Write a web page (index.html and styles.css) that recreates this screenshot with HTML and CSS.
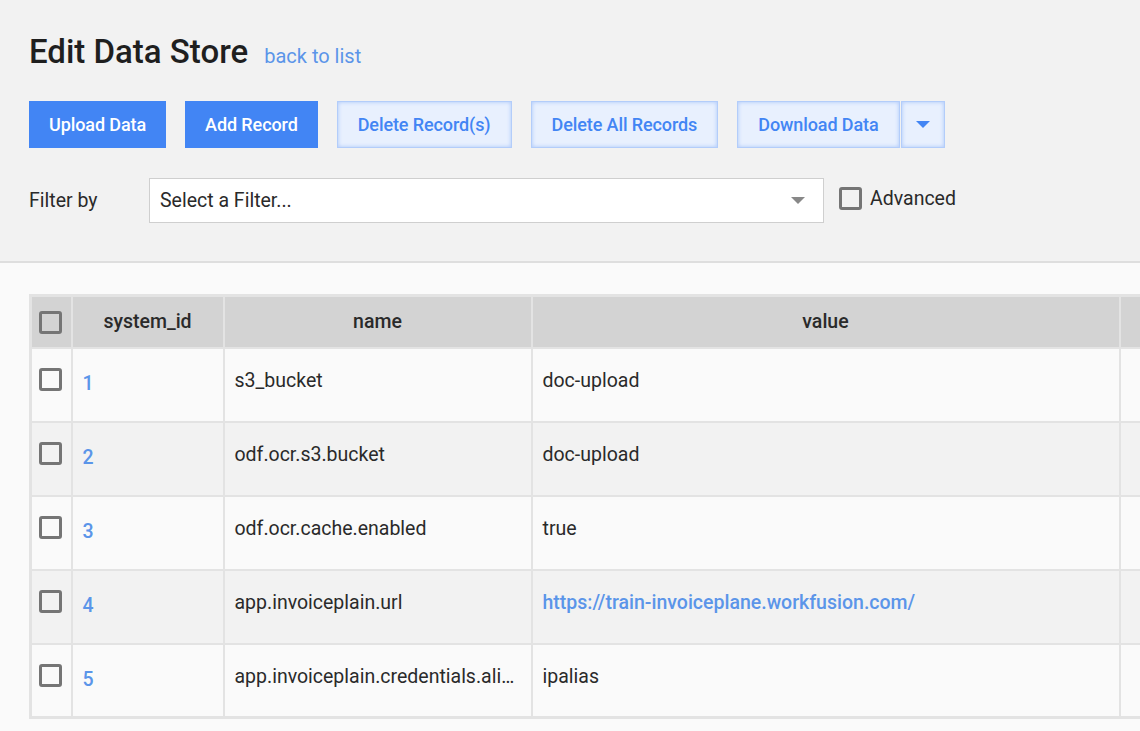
FILE: index.html
```html
<!DOCTYPE html>
<html lang="en">
<head>
  <meta charset="UTF-8" />
  <title>Edit Data Store</title>
  <link rel="stylesheet" href="styles.css">
</head>
<body>
  <div class="top-section">
    <div class="title-row">
      <h1>Edit Data Store</h1>
      <a href="#" class="back-link">back to list</a>
    </div>

    <div class="toolbar">
      <button class="btn btn-primary">Upload Data</button>
      <button class="btn btn-primary">Add Record</button>
      <button class="btn btn-outline">Delete Record(s)</button>
      <button class="btn btn-outline">Delete All Records</button>
      <div class="btn-group">
        <button class="btn btn-outline">Download Data</button>
        <button class="btn btn-outline btn-caret"><span class="caret"></span></button>
      </div>
    </div>

    <div class="filter-row">
      <span class="filter-label">Filter by</span>
      <div class="select-box">
        <span>Select a Filter...</span>
        <span class="select-arrow"></span>
      </div>
      <label class="check-label"><span class="checkbox"></span>Advanced</label>
    </div>
  </div>

  <div class="table-section">
    <table class="data-table">
      <colgroup>
        <col class="w-check">
        <col class="w-id">
        <col class="w-name">
        <col class="w-value">
        <col class="w-extra">
      </colgroup>
      <thead>
        <tr>
          <th class="col-check"><span class="checkbox"></span></th>
          <th>system_id</th>
          <th>name</th>
          <th>value</th>
          <th></th>
        </tr>
      </thead>
      <tbody>
        <tr>
          <td class="col-check"><span class="checkbox"></span></td>
          <td class="col-id"><a href="#">1</a></td>
          <td>s3_bucket</td>
          <td>doc-upload</td>
          <td></td>
        </tr>
        <tr>
          <td class="col-check"><span class="checkbox"></span></td>
          <td class="col-id"><a href="#">2</a></td>
          <td>odf.ocr.s3.bucket</td>
          <td>doc-upload</td>
          <td></td>
        </tr>
        <tr>
          <td class="col-check"><span class="checkbox"></span></td>
          <td class="col-id"><a href="#">3</a></td>
          <td>odf.ocr.cache.enabled</td>
          <td>true</td>
          <td></td>
        </tr>
        <tr>
          <td class="col-check"><span class="checkbox"></span></td>
          <td class="col-id"><a href="#">4</a></td>
          <td>app.invoiceplain.url</td>
          <td><a href="#" class="cell-link">https://train-invoiceplane.workfusion.com/</a></td>
          <td></td>
        </tr>
        <tr>
          <td class="col-check"><span class="checkbox"></span></td>
          <td class="col-id"><a href="#">5</a></td>
          <td>app.invoiceplain.credentials.alias</td>
          <td>ipalias</td>
          <td></td>
        </tr>
      </tbody>
    </table>
  </div>
</body>
</html>
```

FILE: styles.css
```css
html, body {
  margin: 0;
  padding: 0;
}
body {
  background-color: #fafafa;
  color: #2a2a2a;
  font-family: Roboto, "Liberation Sans", sans-serif;
  overflow: hidden;
  width: 1140px;
  height: 731px;
}
.top-section {
  background-color: #f2f2f2;
  border-bottom: 2px solid #dedede;
  padding: 33px 29px 38px;
}
.title-row {
  display: flex;
  align-items: baseline;
  gap: 16px;
}
h1 {
  margin: 0;
  font-size: 33px;
  font-weight: 500;
  color: #1f1f1f;
  line-height: 38px;
}
.back-link {
  color: #5b95e9;
  text-decoration: none;
  font-size: 20px;
}
.toolbar {
  display: flex;
  margin-top: 30px;
  gap: 19px;
}
.btn {
  height: 47px;
  padding: 0 20px;
  font-family: Roboto, "Liberation Sans", sans-serif;
  font-size: 18px;
  font-weight: 500;
  letter-spacing: -0.1px;
  border: none;
  cursor: pointer;
}
.btn-primary {
  background-color: #4285f4;
  color: #fff;
}
.btn-outline {
  background-color: #e8f0fe;
  color: #4285f4;
  border: 1px solid #b3cdfa;
  box-shadow: inset 0 0 4px #a9c6fb;
}
.btn-group {
  display: flex;
  gap: 1px;
}
.btn-caret {
  width: 44px;
  padding: 0;
  display: flex;
  align-items: center;
  justify-content: center;
}
.caret {
  width: 0;
  height: 0;
  border-left: 7px solid transparent;
  border-right: 7px solid transparent;
  border-top: 7px solid #4285f4;
}
.filter-row {
  display: flex;
  align-items: center;
  margin-top: 30px;
}
.filter-label {
  width: 120px;
  font-size: 19.5px;
}
.select-box {
  box-sizing: border-box;
  width: 675px;
  height: 45px;
  background-color: #fff;
  border: 1px solid #cfcfcf;
  display: flex;
  align-items: center;
  justify-content: space-between;
  padding: 0 18px 0 10px;
  font-size: 19.5px;
}
.select-arrow {
  width: 0;
  height: 0;
  border-left: 7px solid transparent;
  border-right: 7px solid transparent;
  border-top: 7px solid #888;
}
.check-label {
  display: flex;
  align-items: center;
  gap: 8px;
  margin-left: 15px;
  margin-top: -4px;
  font-size: 19.5px;
}
.checkbox {
  display: inline-block;
  width: 17px;
  height: 17px;
  border: 3px solid #757575;
  border-radius: 3px;
  box-sizing: content-box;
  vertical-align: top;
}
.table-section {
  padding: 31px 0 0 29px;
}
.data-table {
  border-collapse: collapse;
  border: 3px solid #e3e3e3;
  table-layout: fixed;
  width: 1191px;
  font-size: 19.5px;
}
.w-check { width: 41px; }
.w-id { width: 152px; }
.w-name { width: 308px; }
.w-value { width: 588px; }
.w-extra { width: 100px; }
.data-table th,
.data-table td {
  border: 2px solid #e3e3e3;
  padding: 0 10px;
  overflow: hidden;
  white-space: nowrap;
  text-overflow: ellipsis;
}
.data-table th {
  background-color: #d3d3d3;
  height: 52px;
  box-sizing: border-box;
  font-weight: 500;
  color: #2a2a2a;
  text-align: center;
}
.data-table td {
  height: 74px;
  vertical-align: top;
  padding-top: 20px;
  box-sizing: border-box;
}
.data-table tbody tr:nth-child(odd) td {
  background-color: #fafafa;
}
.data-table tbody tr:nth-child(even) td {
  background-color: #f2f2f2;
}
.data-table .col-check {
  padding: 0 0 0 7px;
  text-align: left;
  text-overflow: clip;
}
.data-table th.col-check {
  padding-top: 1px;
}
.data-table td.col-check {
  padding-top: 19px;
}
.data-table td.col-id {
  padding-top: 23px;
  padding-left: 10px;
}
.data-table td.col-id a {
  color: #5b95e9;
  text-decoration: none;
  font-weight: 500;
}
.cell-link {
  color: #5b95e9;
  text-decoration: none;
  font-weight: 500;
}
```
